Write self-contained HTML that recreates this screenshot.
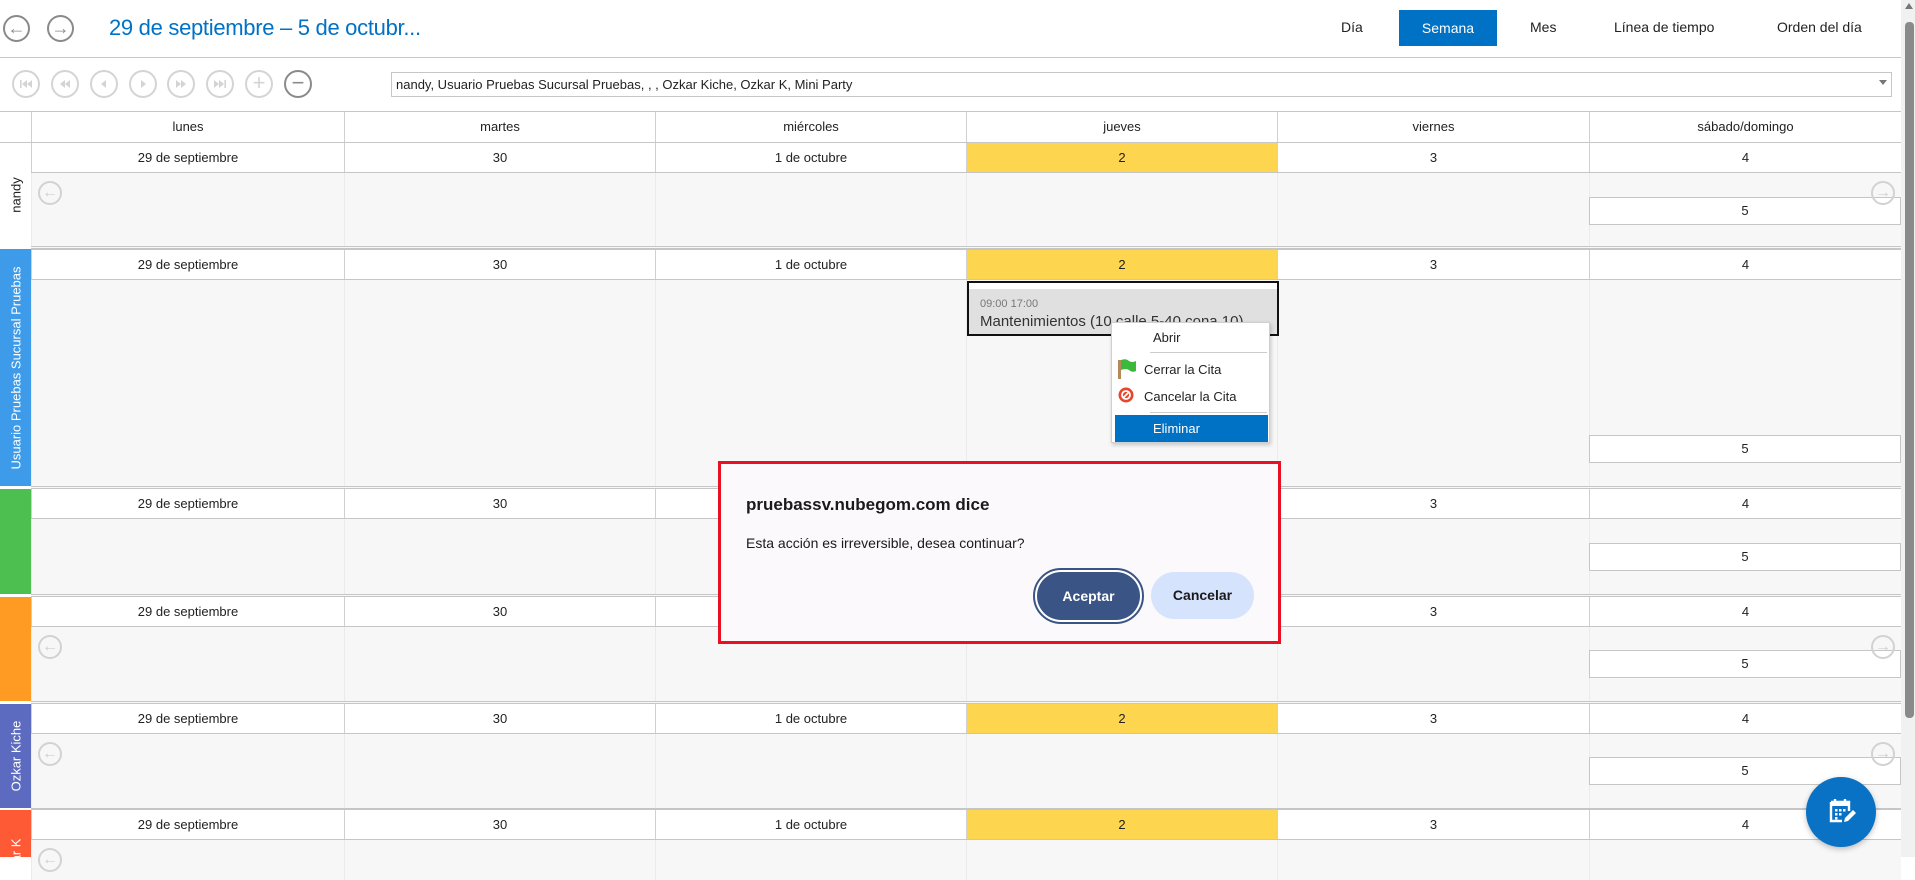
<!DOCTYPE html>
<html><head><meta charset="utf-8">
<style>
*{box-sizing:border-box;margin:0;padding:0}
body{width:1915px;height:857px;overflow:hidden;background:#fff;font-family:"Liberation Sans",sans-serif;font-size:13px;color:#222;position:relative}
.a{position:absolute}
.circ{position:absolute;border-radius:50%;border:2px solid #d4d4d4;width:28px;height:28px}
.circ svg{position:absolute;left:5px;top:5px}
.dr{position:absolute;left:31px;width:1870px;height:31px;background:#fff;border-top:1px solid #c6c6c6;border-bottom:1px solid #c6c6c6}
.bd{position:absolute;left:31px;width:1870px;background:#f7f7f7;border-bottom:3px double #c6c6c6}
.c{position:absolute;top:0;height:100%;text-align:center;line-height:29px;border-left:1px solid #d0d0d0}
.bd .c{border-left:1px solid #ebebeb}
.y{background:#fdd54f}
.lab{position:absolute;left:0;width:31px;color:#fff;overflow:hidden}
.lab span{position:absolute;left:50%;top:50%;transform:translate(-50%,-50%) rotate(-90deg);white-space:nowrap;font-size:13px}
.five{position:absolute;left:1558px;width:312px;height:28px;background:#fff;border:1px solid #c6c6c6;text-align:center;line-height:26px}
.arr{position:absolute;width:24px;height:24px;border-radius:50%;border:2px solid #d2d2d2;color:#cfcfcf;font-size:16px;line-height:19px;text-align:center;font-weight:bold}
</style></head><body>

<!-- top bar -->
<div class="a" style="left:3px;top:15px;width:27px;height:27px;border:2px solid #8a8a8a;border-radius:50%;color:#8a8a8a;font-size:18px;line-height:22px;text-align:center;font-weight:bold">&larr;</div>
<div class="a" style="left:47px;top:15px;width:27px;height:27px;border:2px solid #8a8a8a;border-radius:50%;color:#8a8a8a;font-size:18px;line-height:22px;text-align:center;font-weight:bold">&rarr;</div>
<div class="a" style="left:109px;top:15px;font-size:22px;color:#0072c6;letter-spacing:-0.3px">29 de septiembre – 5 de octubr...</div>
<div class="a" style="left:1341px;top:19px;font-size:14px">Día</div>
<div class="a" style="left:1399px;top:10px;width:98px;height:36px;background:#0072c6;color:#fff;font-size:14px;text-align:center;line-height:36px">Semana</div>
<div class="a" style="left:1530px;top:19px;font-size:14px">Mes</div>
<div class="a" style="left:1614px;top:19px;font-size:14px">Línea de tiempo</div>
<div class="a" style="left:1777px;top:19px;font-size:14px">Orden del día</div>
<div class="a" style="left:0;top:57px;width:1901px;height:1px;background:#c8c8c8"></div>

<!-- toolbar -->
<div class="circ" style="left:12px;top:70px"><svg width="14" height="14" viewBox="0 0 14 14" fill="#d4d4d4"><rect x="1" y="3" width="1.6" height="8"/><path d="M8 3v8L3 7z M13 3v8L8 7z"/></svg></div>
<div class="circ" style="left:51px;top:70px"><svg width="14" height="14" viewBox="0 0 14 14" fill="#d4d4d4"><path d="M7 3v8L2 7z M12 3v8L7 7z"/></svg></div>
<div class="circ" style="left:90px;top:70px"><svg width="14" height="14" viewBox="0 0 14 14" fill="#d4d4d4"><path d="M9 3v8L4 7z"/></svg></div>
<div class="circ" style="left:129px;top:70px"><svg width="14" height="14" viewBox="0 0 14 14" fill="#d4d4d4"><path d="M5 3v8l5-4z"/></svg></div>
<div class="circ" style="left:167px;top:70px"><svg width="14" height="14" viewBox="0 0 14 14" fill="#d4d4d4"><path d="M2 3v8l5-4z M7 3v8l5-4z"/></svg></div>
<div class="circ" style="left:206px;top:70px"><svg width="14" height="14" viewBox="0 0 14 14" fill="#d4d4d4"><path d="M1 3v8l5-4z M6 3v8l5-4z"/><rect x="11.4" y="3" width="1.6" height="8"/></svg></div>
<div class="circ" style="left:245px;top:70px;color:#d4d4d4;font-size:22px;line-height:22px;text-align:center">+</div>
<div class="circ" style="left:284px;top:70px;border-color:#8a8a8a;color:#8a8a8a;font-size:22px;line-height:22px;text-align:center">−</div>
<div class="a" style="left:391px;top:72px;width:1501px;height:25px;border:1px solid #c6c6c6;padding-left:4px;line-height:23px;font-size:13px">nandy, Usuario Pruebas Sucursal Pruebas, , , Ozkar Kiche, Ozkar K, Mini Party</div>
<div class="a" style="left:1879px;top:80px;width:0;height:0;border-left:4px solid transparent;border-right:4px solid transparent;border-top:5px solid #777"></div>

<!-- header row -->
<div class="a" style="left:0;top:111px;width:1901px;height:32px;border-top:1px solid #c6c6c6;border-bottom:1px solid #c6c6c6">
<div class="c" style="left:31px;width:313px">lunes</div><div class="c" style="left:344px;width:311px">martes</div><div class="c" style="left:655px;width:311px">miércoles</div><div class="c" style="left:966px;width:311px">jueves</div><div class="c" style="left:1277px;width:312px">viernes</div><div class="c" style="left:1589px;width:312px">sábado/domingo</div>
</div>

<!-- group nandy -->
<div class="lab" style="top:143px;height:104px;background:#fff;color:#222"><span>nandy</span></div>
<div class="dr" style="top:142px"><div class="c" style="left:0;width:313px">29 de septiembre</div><div class="c" style="left:313px;width:311px">30</div><div class="c" style="left:624px;width:311px">1 de octubre</div><div class="c y" style="left:935px;width:311px">2</div><div class="c" style="left:1246px;width:312px">3</div><div class="c" style="left:1558px;width:312px">4</div></div>
<div class="bd" style="top:173px;height:76px"><div class="c" style="left:0"></div><div class="c" style="left:313px"></div><div class="c" style="left:624px"></div><div class="c" style="left:935px"></div><div class="c" style="left:1246px"></div><div class="c" style="left:1558px"></div><div class="five" style="top:24px">5</div></div>
<div class="arr" style="left:38px;top:181px">&larr;</div><div class="arr" style="left:1871px;top:181px">&rarr;</div>

<!-- group usuario -->
<div class="lab" style="top:249px;height:237px;background:#3d9be9"><span>Usuario Pruebas Sucursal Pruebas</span></div>
<div class="dr" style="top:249px"><div class="c" style="left:0;width:313px">29 de septiembre</div><div class="c" style="left:313px;width:311px">30</div><div class="c" style="left:624px;width:311px">1 de octubre</div><div class="c y" style="left:935px;width:311px">2</div><div class="c" style="left:1246px;width:312px">3</div><div class="c" style="left:1558px;width:312px">4</div></div>
<div class="bd" style="top:280px;height:209px"><div class="c" style="left:0"></div><div class="c" style="left:313px"></div><div class="c" style="left:624px"></div><div class="c" style="left:935px"></div><div class="c" style="left:1246px"></div><div class="c" style="left:1558px"></div><div class="five" style="top:155px">5</div></div>

<!-- group green -->
<div class="lab" style="top:489px;height:105px;background:#4cbf50"></div>
<div class="dr" style="top:488px"><div class="c" style="left:0;width:313px">29 de septiembre</div><div class="c" style="left:313px;width:311px">30</div><div class="c" style="left:624px;width:311px">1 de octubre</div><div class="c y" style="left:935px;width:311px">2</div><div class="c" style="left:1246px;width:312px">3</div><div class="c" style="left:1558px;width:312px">4</div></div>
<div class="bd" style="top:519px;height:78px"><div class="c" style="left:0"></div><div class="c" style="left:313px"></div><div class="c" style="left:624px"></div><div class="c" style="left:935px"></div><div class="c" style="left:1246px"></div><div class="c" style="left:1558px"></div><div class="five" style="top:24px">5</div></div>

<!-- group orange -->
<div class="lab" style="top:597px;height:104px;background:#ff9b22"></div>
<div class="dr" style="top:596px"><div class="c" style="left:0;width:313px">29 de septiembre</div><div class="c" style="left:313px;width:311px">30</div><div class="c" style="left:624px;width:311px">1 de octubre</div><div class="c y" style="left:935px;width:311px">2</div><div class="c" style="left:1246px;width:312px">3</div><div class="c" style="left:1558px;width:312px">4</div></div>
<div class="bd" style="top:627px;height:77px"><div class="c" style="left:0"></div><div class="c" style="left:313px"></div><div class="c" style="left:624px"></div><div class="c" style="left:935px"></div><div class="c" style="left:1246px"></div><div class="c" style="left:1558px"></div><div class="five" style="top:23px">5</div></div>
<div class="arr" style="left:38px;top:635px">&larr;</div><div class="arr" style="left:1871px;top:635px">&rarr;</div>

<!-- group ozkar kiche -->
<div class="lab" style="top:704px;height:104px;background:#5c6bc0"><span>Ozkar Kiche</span></div>
<div class="dr" style="top:703px"><div class="c" style="left:0;width:313px">29 de septiembre</div><div class="c" style="left:313px;width:311px">30</div><div class="c" style="left:624px;width:311px">1 de octubre</div><div class="c y" style="left:935px;width:311px">2</div><div class="c" style="left:1246px;width:312px">3</div><div class="c" style="left:1558px;width:312px">4</div></div>
<div class="bd" style="top:734px;height:77px"><div class="c" style="left:0"></div><div class="c" style="left:313px"></div><div class="c" style="left:624px"></div><div class="c" style="left:935px"></div><div class="c" style="left:1246px"></div><div class="c" style="left:1558px"></div><div class="five" style="top:23px">5</div></div>
<div class="arr" style="left:38px;top:742px">&larr;</div><div class="arr" style="left:1871px;top:742px">&rarr;</div>

<!-- group ozkar k -->
<div class="lab" style="top:810px;height:47px;background:#ff5a36"><span style="top:52px">Ozkar K</span></div>
<div class="dr" style="top:809px"><div class="c" style="left:0;width:313px">29 de septiembre</div><div class="c" style="left:313px;width:311px">30</div><div class="c" style="left:624px;width:311px">1 de octubre</div><div class="c y" style="left:935px;width:311px">2</div><div class="c" style="left:1246px;width:312px">3</div><div class="c" style="left:1558px;width:312px">4</div></div>
<div class="bd" style="top:840px;height:40px;border:none"><div class="c" style="left:0"></div><div class="c" style="left:313px"></div><div class="c" style="left:624px"></div><div class="c" style="left:935px"></div><div class="c" style="left:1246px"></div><div class="c" style="left:1558px"></div></div>
<div class="arr" style="left:38px;top:848px">&larr;</div>

<!-- appointment -->
<div class="a" style="left:967px;top:281px;width:312px;height:55px;border:2px solid #111;background:#fff">
<div class="a" style="left:0;top:6px;right:0;bottom:0;background:#e0e0e0"></div>
<div class="a" style="left:11px;top:15px;font-size:11px;color:#777">09:00 17:00</div>
<div class="a" style="left:11px;top:30px;font-size:15px;color:#333;white-space:nowrap">Mantenimientos (10 calle 5-40 cona 10)</div>
</div>

<!-- context menu -->
<div class="a" style="left:1111px;top:322px;width:159px;height:121px;background:#fff;border:1px solid #cfcfcf;box-shadow:1px 2px 4px rgba(0,0,0,.2)">
<div class="a" style="left:41px;top:7px;font-size:13px">Abrir</div>
<div class="a" style="left:38px;top:29px;width:117px;height:1px;background:#ccc"></div>
<svg class="a" style="left:5px;top:35px" width="20" height="22" viewBox="0 0 20 22"><rect x="1" y="2" width="3" height="19" fill="#b58a5a"/><path d="M4 2 Q9 0 12 3 Q15 5 19 3 L19 13 Q15 15 12 12 Q9 10 4 12Z" fill="#3db83d"/></svg>
<div class="a" style="left:32px;top:39px;font-size:13px">Cerrar la Cita</div>
<svg class="a" style="left:6px;top:64px" width="16" height="16" viewBox="0 0 16 16"><circle cx="8" cy="8" r="7.5" fill="#e8452d"/><circle cx="8" cy="8" r="4" fill="none" stroke="#fff" stroke-width="1.8"/><line x1="5" y1="11" x2="11" y2="5" stroke="#fff" stroke-width="1.8"/></svg>
<div class="a" style="left:32px;top:66px;font-size:13px">Cancelar la Cita</div>
<div class="a" style="left:38px;top:89px;width:117px;height:1px;background:#ccc"></div>
<div class="a" style="left:3px;top:92px;width:153px;height:27px;background:#0072c6;color:#fff;font-size:13px;line-height:27px;padding-left:38px">Eliminar</div>
</div>

<!-- dialog -->
<div class="a" style="left:718px;top:461px;width:563px;height:183px;border:3px solid #e81123;background:#fcf9fc">
<div class="a" style="left:25px;top:31px;font-size:17px;color:#1a1a1a;font-weight:bold">pruebassv.nubegom.com dice</div>
<div class="a" style="left:25px;top:71px;font-size:14px;color:#1a1a1a">Esta acción es irreversible, desea continuar?</div>
<div class="a" style="left:312px;top:104px;width:111px;height:56px;border-radius:28px;border:2px solid #3a5585;background:#fff;padding:2px"><div style="width:100%;height:100%;border-radius:25px;background:#3a5585;color:#fff;font-weight:bold;font-size:14px;text-align:center;line-height:48px">Aceptar</div></div>
<div class="a" style="left:430px;top:108px;width:103px;height:47px;border-radius:24px;background:#d6e3fc;color:#1a1a1a;font-weight:bold;font-size:14px;text-align:center;line-height:47px">Cancelar</div>
</div>

<!-- scrollbar -->
<div class="a" style="left:1901px;top:0;width:14px;height:857px;background:#f1f1f1"></div>
<div class="a" style="left:1905px;top:22px;width:9px;height:696px;background:#8a8a8a;border-radius:4px"></div>
<div class="a" style="left:1905px;top:3px;width:0;height:0;border-left:4px solid transparent;border-right:4px solid transparent;border-bottom:6px solid #777"></div>

<!-- fab -->
<div class="a" style="left:1806px;top:777px;width:70px;height:70px;border-radius:50%;background:#0a72c4;box-shadow:0 2px 6px rgba(0,0,0,.25)">
<svg class="a" style="left:22px;top:20px" width="28" height="28" viewBox="0 0 28 28"><path d="M3 5h18v9M3 5v19h11" fill="none" stroke="#fff" stroke-width="2.4"/><rect x="3" y="5" width="18" height="4" fill="#fff"/><line x1="7" y1="2" x2="7" y2="6" stroke="#fff" stroke-width="2.4"/><line x1="17" y1="2" x2="17" y2="6" stroke="#fff" stroke-width="2.4"/><g fill="#fff"><rect x="7" y="12" width="2.5" height="2.5"/><rect x="11" y="12" width="2.5" height="2.5"/><rect x="15" y="12" width="2.5" height="2.5"/><rect x="7" y="16" width="2.5" height="2.5"/><rect x="11" y="16" width="2.5" height="2.5"/><rect x="7" y="20" width="2.5" height="2.5"/></g><path d="M16 25l1-4 8-8 3 3-8 8z" fill="#fff"/></svg>
</div>

</body></html>
